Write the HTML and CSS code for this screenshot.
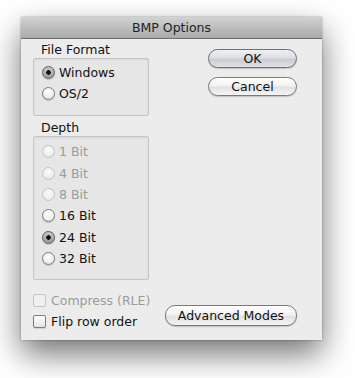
FILE: index.html
```html
<!DOCTYPE html>
<html>
<head>
<meta charset="utf-8">
<link rel="stylesheet" href="styles.css">
</head>
<body>
<div class="window">
  <div class="titlebar">BMP Options</div>
  <div class="content">
    <div class="top">
      <div class="left">
        <div class="label">File Format</div>
        <div class="group group-format">
          <div class="row"><span class="radio on"></span><span>Windows</span></div>
          <div class="row"><span class="radio"></span><span>OS/2</span></div>
        </div>
        <div class="label label-depth">Depth</div>
        <div class="group group-depth">
          <div class="row dis"><span class="radio"></span><span>1 Bit</span></div>
          <div class="row dis"><span class="radio"></span><span>4 Bit</span></div>
          <div class="row dis"><span class="radio"></span><span>8 Bit</span></div>
          <div class="row"><span class="radio"></span><span>16 Bit</span></div>
          <div class="row"><span class="radio on"></span><span>24 Bit</span></div>
          <div class="row"><span class="radio"></span><span>32 Bit</span></div>
        </div>
      </div>
      <div class="right">
        <div class="btn btn-ok">OK</div>
        <div class="btn">Cancel</div>
      </div>
    </div>
    <div class="bottom">
      <div class="checks">
        <div class="row dis"><span class="check"></span><span>Compress (RLE)</span></div>
        <div class="row"><span class="check"></span><span>Flip row order</span></div>
      </div>
      <div class="btn btn-adv">Advanced Modes</div>
    </div>
  </div>
</div>
</body>
</html>
```
FILE: styles.css
```css
html, body {
  margin: 0;
  padding: 0;
  background: #ffffff;
}
body {
  width: 355px;
  height: 378px;
  overflow: hidden;
  font-family: "DejaVu Sans", "Liberation Sans", sans-serif;
  font-size: 12px;
  color: #111;
}
.window {
  margin: 17px 0 0 21px;
  width: 301px;
  height: 323px;
  background: #ececec;
  box-shadow: 0 14px 30px rgba(0,0,0,0.55), 0 0 2px rgba(0,0,0,0.35);
  display: flex;
  flex-direction: column;
}
.titlebar {
  height: 21px;
  line-height: 21px;
  text-align: center;
  font-size: 12.5px;
  color: #222;
  background: linear-gradient(#d2d2d2, #a9a9a9);
  border-bottom: 1px solid #6e6e6e;
}
.content {
  flex: 1;
  padding: 2px 25px 0 12px;
  display: flex;
  flex-direction: column;
}
.top {
  display: flex;
  justify-content: space-between;
}
.left {
  width: 116px;
}
.label {
  height: 17px;
  line-height: 17px;
  padding-left: 8px;
  font-size: 12.5px;
}
.label-depth {
  margin-top: 3px;
}
.group {
  box-sizing: border-box;
  border: 1px solid #c4c4c4;
  border-radius: 2px;
  background: #e6e6e6;
  box-shadow: inset 0 1px 2px rgba(0,0,0,0.08);
  padding: 3px 0 0 8px;
}
.group-format {
  height: 58px;
}
.group-depth {
  height: 144px;
  padding-top: 4px;
}
.row {
  display: flex;
  align-items: center;
  height: 21px;
  gap: 4px;
  font-size: 12.5px;
}
.group-depth .row {
  height: 21.4px;
}
.row.dis {
  color: #9b9b9b;
}
.radio {
  box-sizing: border-box;
  width: 13px;
  height: 13px;
  border-radius: 50%;
  border: 1px solid #7c7c7c;
  background: radial-gradient(circle at 50% 35%, #ffffff 0%, #f0f0f0 55%, #d2d2d2 100%);
  box-shadow: 0 1px 1px rgba(0,0,0,0.15);
  flex: none;
}
.radio.on {
  background: radial-gradient(circle, #111 0 2px, transparent 2.5px),
              linear-gradient(#c8c8c8, #9a9a9a);
  border-color: #5c5c5c;
}
.dis .radio {
  border-color: #c2c2c2;
  background: radial-gradient(circle at 50% 35%, #fafafa 0%, #eeeeee 60%, #e0e0e0 100%);
  box-shadow: none;
}
.check {
  box-sizing: border-box;
  width: 13px;
  height: 13px;
  border: 1px solid #7c7c7c;
  border-radius: 2px;
  background: linear-gradient(#ffffff, #e4e4e4);
  box-shadow: 0 1px 1px rgba(0,0,0,0.12);
  flex: none;
}
.dis .check {
  border-color: #c4c4c4;
  background: #f0f0f0;
  box-shadow: none;
}
.right {
  width: 89px;
  padding-top: 8px;
  display: flex;
  flex-direction: column;
  gap: 9px;
}
.btn {
  box-sizing: border-box;
  height: 19px;
  line-height: 17px;
  text-align: center;
  font-size: 12.5px;
  border: 1px solid #7a7a7a;
  border-radius: 10px;
  background: linear-gradient(#ffffff 0%, #f2f2f2 45%, #e2e2e2 55%, #f4f4f4 100%);
  box-shadow: 0 1px 1px rgba(0,0,0,0.18);
}
.btn-ok {
  background: linear-gradient(#eef0f3 0%, #dcdfe4 45%, #c9cdd3 55%, #dfe2e6 100%);
  border-color: #6f6f6f;
}
.bottom {
  margin-top: 10px;
  display: flex;
  justify-content: space-between;
  align-items: flex-end;
}
.checks .row {
  gap: 5px;
}
.btn-adv {
  width: 132px;
  height: 21px;
  line-height: 19px;
  margin-bottom: 6px;
}
```
